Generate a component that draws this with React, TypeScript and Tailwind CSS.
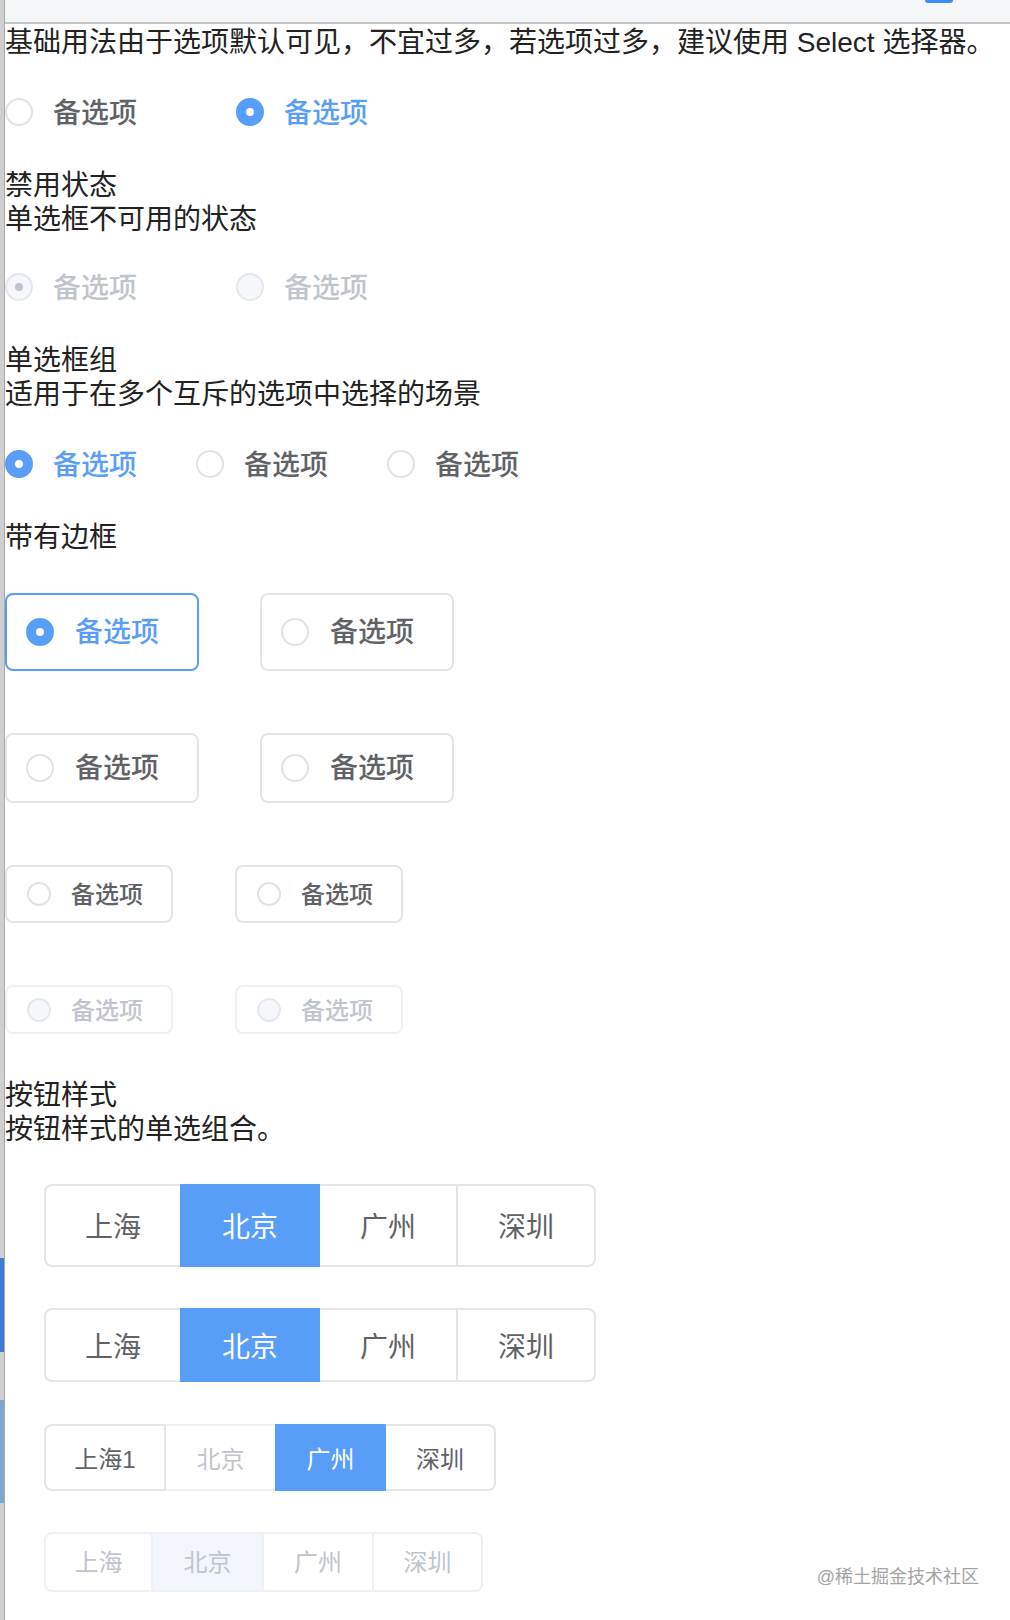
import clsx from 'clsx';

type Mark = 'on' | 'off' | 'disOn' | 'disOff';

function labelColor(mark: Mark) {
  if (mark === 'on') return 'text-[#589ef8]';
  if (mark === 'off') return 'text-[#606266]';
  return 'text-[#c0c4cc]';
}

function Circle({ mark, small }: { mark: Mark; small?: boolean }) {
  return (
    <span
      className={clsx(
        'flex shrink-0 items-center justify-center rounded-full border-2',
        small ? 'h-6 w-6' : 'h-7 w-7',
        mark === 'on' && 'border-[#589ef8] bg-[#589ef8]',
        mark === 'off' && 'border-[#dfe2e8] bg-white',
        (mark === 'disOn' || mark === 'disOff') && 'border-[#e4e7ed] bg-[#f5f7fa]'
      )}
    >
      {mark === 'on' && (
        <span className={clsx('rounded-full bg-white', small ? 'h-[7px] w-[7px]' : 'h-2 w-2')} />
      )}
      {mark === 'disOn' && <span className="h-2 w-2 rounded-full bg-[#c0c4cc]" />}
    </span>
  );
}

function Radio({ mark }: { mark: Mark }) {
  return (
    <div className="flex items-center">
      <Circle mark={mark} />
      <span className={clsx('ml-5 pt-[3px] text-[28px] leading-[40px] font-medium', labelColor(mark))}>
        备选项
      </span>
    </div>
  );
}

type Size = 'lg' | 'md' | 'sm' | 'xs';

function BorderRadio({ mark, size }: { mark: Mark; size: Size }) {
  const small = size === 'sm' || size === 'xs';
  return (
    <div
      className={clsx(
        'flex items-center rounded-[8px] border-2',
        small ? 'w-[168px] pl-[20px]' : 'w-[194px] pl-[19px]',
        size === 'lg' && 'h-[78px]',
        size === 'md' && 'h-[70px]',
        size === 'sm' && 'h-[58px]',
        size === 'xs' && 'h-[49px]',
        mark === 'on' && 'border-[#589ef8]',
        mark === 'off' && 'border-[#e1e4e9]',
        (mark === 'disOn' || mark === 'disOff') && 'border-[#edf0f5]'
      )}
    >
      <Circle mark={mark} small={small} />
      <span
        className={clsx(
          'pt-[2px] font-medium',
          small ? 'ml-[20px] text-[24px]' : 'ml-[21px] text-[28px]',
          labelColor(mark)
        )}
      >
        备选项
      </span>
    </div>
  );
}

type BtnState = 'normal' | 'active' | 'disabled' | 'disabledActive';

interface Btn {
  label: string;
  w: string;
  state: BtnState;
}

function ButtonGroup({
  items,
  h,
  big,
  tight,
}: {
  items: Btn[];
  h: string;
  big?: boolean;
  tight?: boolean;
}) {
  return (
    <div className={clsx('ml-[39px] flex', h)}>
      {items.map((b, i) => (
        <div
          key={i}
          className={clsx(
            'flex items-center justify-center border-y-2 border-r-2',
            tight ? 'pt-[1px]' : 'pt-[5px]',
            b.w,
            big ? 'text-[28px]' : 'text-[24px]',
            i === 0 && 'rounded-l-[8px] border-l-2',
            i === items.length - 1 && 'rounded-r-[8px]',
            b.state === 'normal' && 'border-[#e2e5ea] bg-white text-[#606266]',
            b.state === 'active' &&
              'border-[#589ef8] bg-[#589ef8] text-white shadow-[-2px_0_0_0_#589ef8]',
            b.state === 'disabled' && 'border-[#edf0f5] bg-white text-[#c0c4cc]',
            b.state === 'disabledActive' && 'border-[#edf0f5] bg-[#f2f6fc] text-[#c0c4cc]'
          )}
        >
          {b.label}
        </div>
      ))}
    </div>
  );
}

const cities = ['上海', '北京', '广州', '深圳'];

export default function App() {
  const g1: Btn[] = cities.map((c, i) => ({
    label: c,
    w: 'w-[138px]',
    state: i === 1 ? 'active' : 'normal',
  }));
  const g3: Btn[] = [
    { label: '上海1', w: 'w-[122px]', state: 'normal' },
    { label: '北京', w: 'w-[111px]', state: 'disabled' },
    { label: '广州', w: 'w-[109px]', state: 'active' },
    { label: '深圳', w: 'w-[110px]', state: 'normal' },
  ];
  const g4: Btn[] = [
    { label: '上海', w: 'w-[109px]', state: 'disabled' },
    { label: '北京', w: 'w-[111px]', state: 'disabledActive' },
    { label: '广州', w: 'w-[110px]', state: 'disabled' },
    { label: '深圳', w: 'w-[109px]', state: 'disabled' },
  ];

  return (
    <div className="relative flex h-[1620px] w-[1010px] overflow-hidden bg-white [font-family:'Liberation_Sans','Noto_Sans_CJK_SC',sans-serif]">
      {/* 左侧边栏残影 */}
      <div className="flex w-[4px] shrink-0 flex-col bg-[#cfcfcf]">
        <div className="h-[1258px]" />
        <div className="h-[94px] bg-[#3f7bd2]" />
        <div className="h-[48px]" />
        <div className="h-[103px] bg-[#7fa5d1]" />
      </div>

      <div className="flex flex-1 flex-col border-l border-[#a9a9a9] text-[#222]">
        {/* 顶部栏 */}
        <div className="flex h-[24px] justify-end border-b-2 border-[#c4c4c4] bg-[#f5f6f8] pr-[57px]">
          <div className="h-[3px] w-[28px] rounded-b-[3px] bg-[#3d8cf5]" />
        </div>

        <p className="mt-[2px] whitespace-nowrap text-[28px] leading-[34px]">
          基础用法由于选项默认可见，不宜过多，若选项过多，建议使用 Select 选择器。
        </p>
        <div className="mt-[32px] flex h-[40px] items-center gap-[99px]">
          <Radio mark="off" />
          <Radio mark="on" />
        </div>

        <div className="mt-[37px] text-[28px] leading-[34px]">
          <p>禁用状态</p>
          <p>单选框不可用的状态</p>
        </div>
        <div className="mt-[30px] flex h-[40px] items-center gap-[99px]">
          <Radio mark="disOn" />
          <Radio mark="disOff" />
        </div>

        <div className="mt-[37px] text-[28px] leading-[34px]">
          <p>单选框组</p>
          <p>适用于在多个互斥的选项中选择的场景</p>
        </div>
        <div className="mt-[32px] flex h-[40px] items-center gap-[59px]">
          <Radio mark="on" />
          <Radio mark="off" />
          <Radio mark="off" />
        </div>

        <p className="mt-[37px] text-[28px] leading-[34px]">带有边框</p>
        <div className="mt-[38px] flex gap-[61px]">
          <BorderRadio mark="on" size="lg" />
          <BorderRadio mark="off" size="lg" />
        </div>
        <div className="mt-[62px] flex gap-[61px]">
          <BorderRadio mark="off" size="md" />
          <BorderRadio mark="off" size="md" />
        </div>
        <div className="mt-[62px] flex gap-[62px]">
          <BorderRadio mark="off" size="sm" />
          <BorderRadio mark="off" size="sm" />
        </div>
        <div className="mt-[62px] flex gap-[62px]">
          <BorderRadio mark="disOff" size="xs" />
          <BorderRadio mark="disOff" size="xs" />
        </div>

        <div className="mt-[45px] text-[28px] leading-[34px]">
          <p>按钮样式</p>
          <p>按钮样式的单选组合。</p>
        </div>
        <div className="mt-[37px]">
          <ButtonGroup items={g1} h="h-[83px]" big />
        </div>
        <div className="mt-[41px]">
          <ButtonGroup items={g1} h="h-[74px]" big />
        </div>
        <div className="mt-[42px]">
          <ButtonGroup items={g3} h="h-[67px]" />
        </div>
        <div className="mt-[41px]">
          <ButtonGroup items={g4} h="h-[60px]" tight />
        </div>
      </div>

      {/* 水印 */}
      <span className="absolute right-[31px] top-[1566px] text-[18px] leading-[22px] text-[#a3a3a3]">
        @稀土掘金技术社区
      </span>
    </div>
  );
}
